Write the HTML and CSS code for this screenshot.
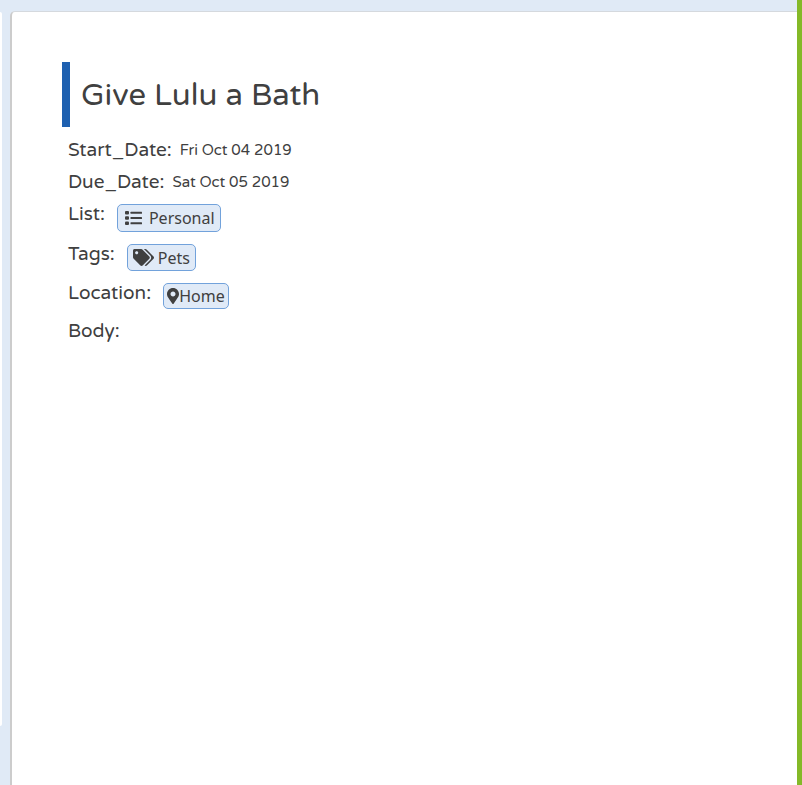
FILE: index.html
```html
<!DOCTYPE html>
<html lang="en">
<head>
<meta charset="utf-8">
<meta name="viewport" content="width=device-width, initial-scale=1">
<title>Give Lulu a Bath</title>
<link rel="stylesheet" href="styles.css">
</head>
<body>
<div class="layout">
  <aside class="list-edge"></aside>
  <main class="card">
    <h1 class="title">Give Lulu a Bath</h1>
    <dl class="details">
      <div class="row"><dt>Start_Date:</dt><dd class="date">Fri Oct 04 2019</dd></div>
      <div class="row"><dt>Due_Date:</dt><dd class="date">Sat Oct 05 2019</dd></div>
      <div class="row row-pill"><dt>List:</dt><dd class="pill pill-list">
        <svg class="icon-list" viewBox="0 0 17 14" aria-hidden="true"><rect x="0" y="0" width="4" height="3.4" rx="1"/><rect x="0" y="5.3" width="4" height="3.4" rx="1"/><rect x="0" y="10.6" width="4" height="3.4" rx="1"/><rect x="5.5" y=".7" width="11.5" height="2" rx=".5"/><rect x="5.5" y="6" width="11.5" height="2" rx=".5"/><rect x="5.5" y="11.3" width="11.5" height="2" rx=".5"/></svg>
        <span>Personal</span></dd></div>
      <div class="row row-pill"><dt>Tags:</dt><dd class="pill pill-tags">
        <svg class="icon-tags" viewBox="0 0 640 512" aria-hidden="true"><path d="M497.941 225.941L286.059 14.059A48 48 0 0 0 252.118 0H48C21.49 0 0 21.49 0 48v204.118a48 48 0 0 0 14.059 33.941l211.882 211.882c18.744 18.745 49.136 18.746 67.882 0l204.118-204.118c18.745-18.745 18.745-49.137 0-67.882zM112 160c-26.51 0-48-21.49-48-48s21.49-48 48-48 48 21.49 48 48-21.49 48-48 48zm513.941 133.823L421.823 497.941c-18.745 18.745-49.137 18.745-67.882 0l-.36-.36L527.64 323.522c16.999-16.999 26.36-39.6 26.36-63.64s-9.362-46.641-26.36-63.64L331.397 0h48.721a48 48 0 0 1 33.941 14.059l211.882 211.882c18.745 18.745 18.745 49.137 0 67.882z"/></svg>
        <span>Pets</span></dd></div>
      <div class="row row-pill"><dt>Location:</dt><dd class="pill pill-location">
        <svg class="icon-pin" viewBox="0 0 384 512" aria-hidden="true"><path d="M172.268 501.67C26.97 291.031 0 269.413 0 192 0 85.961 85.961 0 192 0s192 85.961 192 192c0 77.413-26.97 99.031-172.268 309.67-9.535 13.774-29.93 13.773-39.464 0zM192 272c44.183 0 80-35.817 80-80s-35.817-80-80-80-80 35.817-80 80 35.817 80 80 80z"/></svg>
        <span>Home</span></dd></div>
      <div class="row"><dt>Body:</dt><dd></dd></div>
    </dl>
  </main>
</div>
</body>
</html>
```
FILE: styles.css
```css
* {
  box-sizing: border-box;
}

body {
  margin: 0;
  background: #e0eaf6;
  color: #404040;
  font-family: "Varela Round", "Noto Sans", sans-serif;
}

.layout {
  display: flex;
  gap: 8px;
  min-height: 100vh;
  padding-top: 11px;
  border-right: 5px solid #84b928;
}

.list-edge {
  width: 2px;
  margin: 1px 0 59px;
  background: #fff;
  border-radius: 0 2px 2px 0;
}

.card {
  flex: 1;
  padding: 50px;
  background: #fff;
  border-top: 1px solid #d5d9de;
  border-left: 2px solid #ccc;
  border-top-left-radius: 5px;
}

.title {
  margin: 0;
  padding: 13px 11px 11px;
  border-left: 8px solid #1e60b0;
  font-size: 31px;
  font-weight: 400;
  line-height: 41px;
}

.details {
  margin: 11px 0 0;
  padding-left: 6px;
  font-size: 19px;
  line-height: 24px;
}

.row {
  display: flex;
  align-items: flex-start;
  gap: 8px;
  padding-bottom: 8px;
}

.row-pill {
  gap: 12px;
  padding: 2px 0 10px;
}

.row-pill dt {
  margin-top: -2px;
}

dd {
  margin: 0;
}

.date {
  font-size: 15px;
}

.pill {
  display: flex;
  align-items: center;
  border: 1px solid #72a2db;
  border-radius: 5px;
  background: #e0eaf7;
  font-family: "Noto Sans", sans-serif;
  font-size: 16px;
}

.pill svg {
  fill: #404040;
}

.pill-list {
  gap: 7px;
  height: 28px;
  padding: 0 5px 0 7px;
}

.pill-tags {
  gap: 4px;
  height: 27px;
  padding: 0 5px;
}

.pill-location {
  height: 26px;
  padding: 0 3px;
}

.icon-list {
  width: 17px;
  height: 14px;
}

.icon-tags {
  width: 21px;
  height: 17px;
}

.icon-pin {
  width: 12px;
  height: 16px;
}
```
